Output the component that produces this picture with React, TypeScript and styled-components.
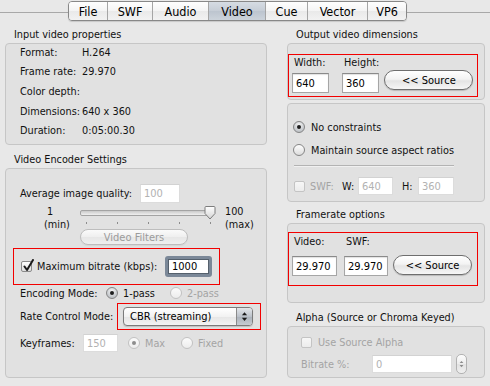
import React from 'react';
import styled, { createGlobalStyle } from 'styled-components';

const FONT = `"DejaVu Sans Condensed", "DejaVu Sans", sans-serif`;

const Global = createGlobalStyle`
  html, body { margin: 0; padding: 0; background: #e8e8e8; }
  body { font-family: ${FONT}; font-size: 10.8px; color: #111; }
  * { box-sizing: border-box; }
`;

const Page = styled.div`
  width: 490px;
  height: 386px;
  overflow: hidden;
  background: #e8e8e8;
`;

const TabBar = styled.div`
  position: relative;
  height: 22px;
  padding: 1px 0 0 68px;
  display: flex;
  &::before {
    content: '';
    position: absolute;
    left: 0;
    right: 0;
    top: 12px;
    height: 1px;
    background: #a8a8a8;
  }
`;

const Tabs = styled.div`
  position: relative;
  display: flex;
  height: 20px;
  border: 1px solid #888;
  border-radius: 4px;
  overflow: hidden;
  box-shadow: 0 1px 1px rgba(0, 0, 0, 0.14);
`;

const Tab = styled.div<{ $w: number; $active?: boolean }>`
  width: ${p => p.$w}px;
  display: flex;
  align-items: center;
  justify-content: center;
  font-size: 12.5px;
  color: #000;
  background: ${p =>
    p.$active
      ? 'linear-gradient(#d6dce3, #c6cdd6 50%, #bcc4ce 50%, #ccd3db)'
      : 'linear-gradient(#fefefe, #f4f4f4 50%, #e9e9e9 50%, #f2f2f2)'};
  & + & {
    border-left: 1px solid #a5a5a5;
  }
`;

const Main = styled.div`
  display: grid;
  grid-template-columns: 262px 198px;
  column-gap: 20px;
  padding: 6px 0 0 5px;
`;

const Column = styled.div`
  display: flex;
  flex-direction: column;
`;

const GroupTitle = styled.div<{ $mt?: number }>`
  height: 14px;
  line-height: 14px;
  padding-left: 9px;
  margin-top: ${p => p.$mt ?? 0}px;
  margin-bottom: 1px;
  white-space: nowrap;
`;

const Box = styled.div<{ $h: number; $mt?: number }>`
  height: ${p => p.$h}px;
  margin-top: ${p => p.$mt ?? 0}px;
  border: 1px solid #c6c6c6;
  border-radius: 4px;
  background: #e1e1e1;
  display: flex;
  flex-direction: column;
`;

const InfoList = styled.div`
  display: flex;
  flex-direction: column;
  gap: 3.7px;
  padding-left: 14px;
`;

const InfoRow = styled.div`
  display: flex;
  align-items: center;
  height: 16px;
  white-space: nowrap;
`;

const InfoKey = styled.span`
  width: 62px;
  flex: none;
`;

const Row = styled.div<{ $h: number; $mt?: number; $pl?: number }>`
  display: flex;
  align-items: center;
  height: ${p => p.$h}px;
  margin-top: ${p => p.$mt ?? 0}px;
  padding-left: ${p => p.$pl ?? 0}px;
  white-space: nowrap;
  flex: none;
`;

const Text = styled.span<{ $w?: number; $ml?: number; $dim?: boolean }>`
  flex: none;
  ${p => (p.$w ? `width: ${p.$w}px;` : '')}
  margin-left: ${p => p.$ml ?? 0}px;
  color: ${p => (p.$dim ? '#a4a4a4' : 'inherit')};
  white-space: nowrap;
`;

const TextField = styled.div<{ $w: number; $h: number; $dim?: boolean; $ml?: number }>`
  flex: none;
  width: ${p => p.$w}px;
  height: ${p => p.$h}px;
  margin-left: ${p => p.$ml ?? 0}px;
  background: #fff;
  border: 1px solid ${p => (p.$dim ? '#dcdcdc' : '#a6a6a6')};
  border-top-color: ${p => (p.$dim ? '#d2d2d2' : '#8a8a8a')};
  box-shadow: ${p => (p.$dim ? 'none' : 'inset 0 1px 1px rgba(0,0,0,0.12)')};
  padding-left: 3px;
  display: flex;
  align-items: center;
  font-size: 11px;
  color: ${p => (p.$dim ? '#b2b2b2' : '#000')};
`;

const FocusField = styled.div<{ $w: number; $h: number }>`
  flex: none;
  width: ${p => p.$w}px;
  height: ${p => p.$h}px;
  background: #fff;
  border: 3px solid #7b8898;
  border-radius: 3px;
  box-shadow: inset 0 0 0 1px #55606c;
  padding-left: 4px;
  display: flex;
  align-items: center;
  font-size: 11px;
  color: #000;
`;

const RedFrame = styled.div<{ $w: number; $h: number; $mt?: number; $ml?: number; $pad?: string }>`
  flex: none;
  width: ${p => p.$w}px;
  height: ${p => p.$h}px;
  margin-top: ${p => p.$mt ?? 0}px;
  margin-left: ${p => p.$ml ?? 0}px;
  padding: ${p => p.$pad ?? '0'};
  border: 1px solid #f20000;
  display: flex;
  align-items: center;
`;

const FieldRow = styled(RedFrame)`
  align-items: flex-end;
`;

const FieldCol = styled.div<{ $ml?: number; $gap: number }>`
  display: flex;
  flex-direction: column;
  margin-left: ${p => p.$ml ?? 0}px;
  gap: ${p => p.$gap}px;
`;

const ColLabel = styled.div`
  height: 14px;
  line-height: 14px;
  padding-left: 2px;
`;

const PushButton = styled.div<{ $w: number; $h: number; $dim?: boolean; $ml?: number; $mb?: number }>`
  flex: none;
  width: ${p => p.$w}px;
  height: ${p => p.$h}px;
  margin-left: ${p => p.$ml ?? 0}px;
  margin-bottom: ${p => p.$mb ?? 0}px;
  border-radius: 999px;
  border: 1px solid ${p => (p.$dim ? '#bdbdbd' : '#6e6e6e')};
  background: ${p =>
    p.$dim
      ? 'linear-gradient(#fafafa, #efefef 50%, #e6e6e6 50%, #efefef)'
      : 'linear-gradient(#ffffff, #f3f3f3 45%, #e4e4e4 55%, #f6f6f6)'};
  box-shadow: 0 1px 1px rgba(0, 0, 0, ${p => (p.$dim ? 0.05 : 0.18)});
  display: flex;
  align-items: center;
  justify-content: center;
  font-size: 11px;
  color: ${p => (p.$dim ? '#9b9b9b' : '#000')};
`;

const CheckBox = styled.span<{ $dim?: boolean }>`
  position: relative;
  flex: none;
  width: 11px;
  height: 11px;
  border: 1px solid ${p => (p.$dim ? '#c4c4c4' : '#8a8a8a')};
  border-radius: 2px;
  background: ${p => (p.$dim ? 'linear-gradient(#f7f7f7, #ececec)' : 'linear-gradient(#fefefe, #dedede)')};
  & > svg {
    position: absolute;
    left: 0px;
    top: -3px;
  }
`;

const Radio = styled.span<{ $on?: boolean; $dim?: boolean }>`
  position: relative;
  flex: none;
  width: 12px;
  height: 12px;
  border-radius: 50%;
  border: 1px solid ${p => (p.$dim ? '#c2c2c2' : '#858585')};
  background: ${p =>
    p.$on && !p.$dim
      ? 'radial-gradient(circle at 50% 30%, #f4f4f4, #aeb3b9)'
      : p.$dim
      ? 'linear-gradient(#fbfbfb, #ececec)'
      : 'linear-gradient(#fefefe, #dcdcdc)'};
  &::after {
    content: '';
    display: ${p => (p.$on ? 'block' : 'none')};
    position: absolute;
    left: 50%;
    top: 50%;
    width: 4px;
    height: 4px;
    margin: -2px 0 0 -2px;
    border-radius: 50%;
    background: ${p => (p.$dim ? '#8d8d8d' : '#1e1e1e')};
  }
`;

const Option = styled.div<{ $w?: number; $ml?: number; $gap: number; $dim?: boolean }>`
  display: flex;
  align-items: center;
  flex: none;
  gap: ${p => p.$gap}px;
  ${p => (p.$w ? `width: ${p.$w}px;` : '')}
  margin-left: ${p => p.$ml ?? 0}px;
  color: ${p => (p.$dim ? '#a4a4a4' : 'inherit')};
`;

const SliderRow = styled.div`
  display: flex;
  height: 40px;
  padding-left: 38px;
  flex: none;
`;

const SliderEnd = styled.div<{ $w?: number; $ml?: number }>`
  display: flex;
  flex-direction: column;
  line-height: 13px;
  ${p => (p.$w ? `width: ${p.$w}px;` : '')}
  margin-left: ${p => p.$ml ?? 0}px;
  white-space: nowrap;
`;

const SliderCenter = styled.div`
  width: 135px;
  display: flex;
  flex-direction: column;
`;

const Track = styled.div`
  position: relative;
  height: 16px;
  &::before {
    content: '';
    position: absolute;
    left: 0;
    right: 3px;
    top: 5px;
    height: 4px;
    border-radius: 2px;
    border: 1px solid #a3a3a3;
    background: linear-gradient(#c9c9c9, #efefef);
  }
  & > svg {
    position: absolute;
    left: 124px;
    top: 1px;
  }
`;

const Ticks = styled.div`
  display: flex;
  justify-content: space-between;
  padding: 0 4px 0 6px;
  height: 6px;
`;

const Tick = styled.span`
  width: 1px;
  height: 2px;
  margin-top: 1px;
  background: #8c8c8c;
`;

const FilterButton = styled(PushButton)`
  margin-top: 2px;
`;

const SelectBox = styled.div`
  flex: none;
  width: 130px;
  height: 19px;
  border: 1px solid #7b7b7b;
  border-radius: 4px;
  overflow: hidden;
  background: linear-gradient(#ffffff, #f2f2f2 50%, #e5e5e5 50%, #f3f3f3);
  box-shadow: 0 1px 1px rgba(0, 0, 0, 0.15);
  display: flex;
  align-items: center;
`;

const SelectText = styled.span`
  flex: 1;
  padding-left: 6px;
  font-size: 11px;
  color: #000;
`;

const SelectArrows = styled.span`
  width: 16px;
  height: 100%;
  border-left: 1px solid #8a8a8a;
  background: linear-gradient(#e3e6ea, #bcc2ca 50%, #aab1ba 50%, #c6cbd1);
  display: flex;
  align-items: center;
  justify-content: center;
`;

const Stepper = styled.div`
  flex: none;
  width: 11px;
  height: 20px;
  margin-left: 4px;
  border: 1px solid #b2b2b2;
  border-radius: 5px;
  background: linear-gradient(#fdfdfd, #ececec 50%, #e2e2e2 50%, #efefef);
  display: flex;
  align-items: center;
  justify-content: center;
`;

const Divider = styled.div`
  width: 160px;
  height: 1px;
  margin: 7px 0 0 6px;
  background: #b3b3b3;
  box-shadow: 0 1px 0 #f0f0f0;
  flex: none;
`;

const CheckMark = () => (
  <svg width="13" height="14" viewBox="0 0 13 14">
    <path d="M2.5 7.5 L5 11 L11 1" fill="none" stroke="#1b1b1b" strokeWidth="2" strokeLinecap="round" strokeLinejoin="round" />
  </svg>
);

const Thumb = () => (
  <svg width="12" height="14" viewBox="0 0 12 14">
    <defs>
      <linearGradient id="tg" x1="0" x2="0" y1="0" y2="1">
        <stop offset="0" stopColor="#ffffff" />
        <stop offset="1" stopColor="#d4d4d4" />
      </linearGradient>
    </defs>
    <path d="M1 1.5 Q1 0.5 2 0.5 L10 0.5 Q11 0.5 11 1.5 L11 7.5 L6 13 L1 7.5 Z" fill="url(#tg)" stroke="#7d7d7d" strokeWidth="1" />
  </svg>
);

const UpDown = ({ color, w, h }: { color: string; w: number; h: number }) => (
  <svg width={w} height={h} viewBox="0 0 8 12">
    <path d="M4 1 L7 4.5 L1 4.5 Z" fill={color} />
    <path d="M4 11 L7 7.5 L1 7.5 Z" fill={color} />
  </svg>
);

const tabs: [string, number][] = [
  ['File', 38],
  ['SWF', 45],
  ['Audio', 56],
  ['Video', 57],
  ['Cue', 42],
  ['Vector', 60],
  ['VP6', 39],
];

const info: [string, string][] = [
  ['Format:', 'H.264'],
  ['Frame rate:', '29.970'],
  ['Color depth:', ''],
  ['Dimensions:', '640 x 360'],
  ['Duration:', '0:05:00.30'],
];

export default function App() {
  return (
    <Page>
      <Global />
      <TabBar>
        <Tabs>
          {tabs.map(([t, w]) => (
            <Tab key={t} $w={w} $active={t === 'Video'}>
              {t}
            </Tab>
          ))}
        </Tabs>
      </TabBar>
      <Main>
        <Column>
          <GroupTitle>Input video properties</GroupTitle>
          <Box $h={102}>
            <InfoList>
              {info.map(([k, v]) => (
                <InfoRow key={k}>
                  <InfoKey>{k}</InfoKey>
                  <span>{v}</span>
                </InfoRow>
              ))}
            </InfoList>
          </Box>

          <GroupTitle $mt={8}>Video Encoder Settings</GroupTitle>
          <Box $h={210}>
            <Row $h={24} $mt={12} $pl={14}>
              <Text $w={120}>Average image quality:</Text>
              <TextField $w={40} $h={19} $dim>100</TextField>
            </Row>
            <SliderRow>
              <SliderEnd $w={36}>
                <span>&nbsp;1</span>
                <span>(min)</span>
              </SliderEnd>
              <SliderCenter>
                <Track>
                  <Thumb />
                </Track>
                <Ticks>
                  <Tick />
                  <Tick />
                  <Tick />
                  <Tick />
                  <Tick />
                </Ticks>
                <FilterButton $w={108} $h={16} $dim>
                  Video Filters
                </FilterButton>
              </SliderCenter>
              <SliderEnd $ml={10}>
                <span>100</span>
                <span>(max)</span>
              </SliderEnd>
            </SliderRow>
            <RedFrame $w={207} $h={37} $mt={3} $ml={7} $pad="0 0 0 7px">
              <CheckBox>
                <CheckMark />
              </CheckBox>
              <Text $w={128} $ml={5}>
                Maximum bitrate (kbps):
              </Text>
              <FocusField $w={47} $h={21}>
                1000
              </FocusField>
            </RedFrame>
            <Row $h={16} $pl={14}>
              <Text $w={86}>Encoding Mode:</Text>
              <Option $w={64} $gap={5}>
                <Radio $on />
                <span>1-pass</span>
              </Option>
              <Option $gap={5} $dim>
                <Radio $dim />
                <span>2-pass</span>
              </Option>
            </Row>
            <Row $h={27} $mt={2} $pl={14}>
              <Text $w={97}>Rate Control Mode:</Text>
              <RedFrame $w={144} $h={27} $pad="0 0 0 5px">
                <SelectBox>
                  <SelectText>CBR (streaming)</SelectText>
                  <SelectArrows>
                    <UpDown color="#1a1a1a" w={7} h={11} />
                  </SelectArrows>
                </SelectBox>
              </RedFrame>
            </Row>
            <Row $h={26} $pl={14}>
              <Text $w={63}>Keyframes:</Text>
              <TextField $w={35} $h={18} $dim>
                150
              </TextField>
              <Option $w={53} $ml={10} $gap={5} $dim>
                <Radio $on $dim />
                <span>Max</span>
              </Option>
              <Option $gap={5} $dim>
                <Radio $dim />
                <span>Fixed</span>
              </Option>
            </Row>
          </Box>
        </Column>

        <Column>
          <GroupTitle>Output video dimensions</GroupTitle>
          <Box $h={57}>
            <FieldRow $w={190} $h={43} $mt={10} $pad="1px 0 3px 3px">
              <FieldCol $gap={3}>
                <ColLabel>Width:</ColLabel>
                <TextField $w={37} $h={20}>640</TextField>
              </FieldCol>
              <FieldCol $gap={3} $ml={13}>
                <ColLabel>Height:</ColLabel>
                <TextField $w={37} $h={20}>360</TextField>
              </FieldCol>
              <PushButton $w={89} $h={20} $ml={5} $mb={3}>
                &lt;&lt; Source
              </PushButton>
            </FieldRow>
          </Box>
          <Box $h={99} $mt={3}>
            <Row $h={16} $mt={15} $pl={5}>
              <Option $gap={6}>
                <Radio $on />
                <span>No constraints</span>
              </Option>
            </Row>
            <Row $h={16} $mt={7} $pl={5}>
              <Option $gap={6}>
                <Radio />
                <span>Maintain source aspect ratios</span>
              </Option>
            </Row>
            <Divider />
            <Row $h={18} $mt={11} $pl={6}>
              <CheckBox $dim />
              <Text $w={32} $ml={5} $dim>
                SWF:
              </Text>
              <Text $w={16}>W:</Text>
              <TextField $w={35} $h={18} $dim>
                640
              </TextField>
              <Text $w={16} $ml={9}>
                H:
              </Text>
              <TextField $w={36} $h={18} $dim>
                360
              </TextField>
            </Row>
          </Box>

          <GroupTitle $mt={6}>Framerate options</GroupTitle>
          <Box $h={80}>
            <FieldRow $w={190} $h={54} $mt={8} $pad="2px 0 9px 3px">
              <FieldCol $gap={7}>
                <ColLabel>Video:</ColLabel>
                <TextField $w={45} $h={20}>29.970</TextField>
              </FieldCol>
              <FieldCol $gap={7} $ml={7}>
                <ColLabel>SWF:</ColLabel>
                <TextField $w={44} $h={20}>29.970</TextField>
              </FieldCol>
              <PushButton $w={79} $h={20} $ml={5} $mb={1}>
                &lt;&lt; Source
              </PushButton>
            </FieldRow>
          </Box>

          <GroupTitle $mt={8}>Alpha (Source or Chroma Keyed)</GroupTitle>
          <Box $h={52}>
            <Row $h={16} $mt={7} $pl={13}>
              <CheckBox $dim />
              <Text $ml={6} $dim>
                Use Source Alpha
              </Text>
            </Row>
            <Row $h={20} $mt={4} $pl={13}>
              <Text $w={71} $dim>
                Bitrate %:
              </Text>
              <TextField $w={80} $h={18} $dim>
                0
              </TextField>
              <Stepper>
                <UpDown color="#8a8a8a" w={5} h={12} />
              </Stepper>
            </Row>
          </Box>
        </Column>
      </Main>
    </Page>
  );
}
